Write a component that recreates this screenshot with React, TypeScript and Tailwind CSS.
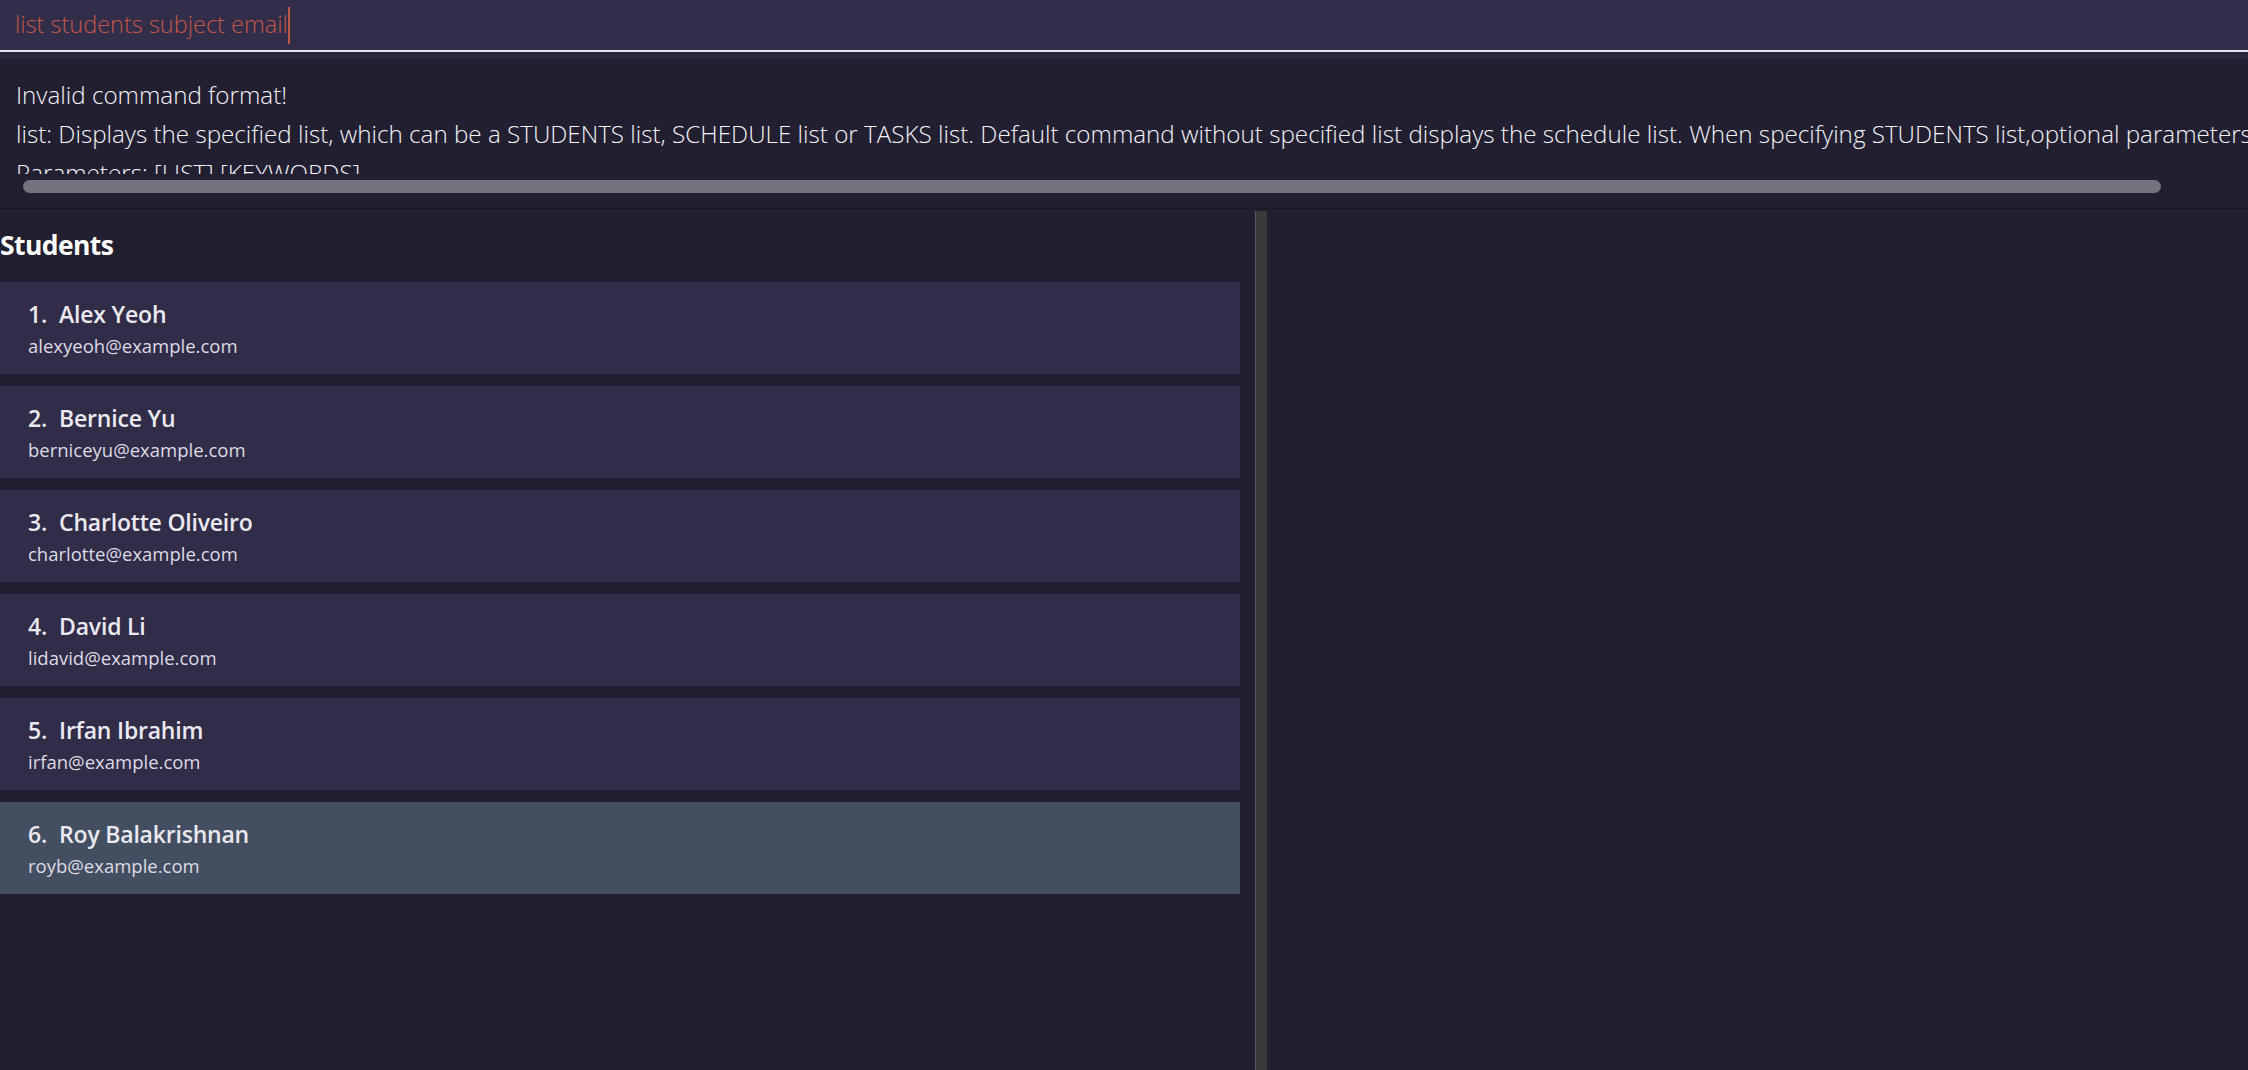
import React from 'react';

type Student = { name: string; email: string };

const students: Student[] = [
    { name: 'Alex Yeoh', email: 'alexyeoh@example.com' },
    { name: 'Bernice Yu', email: 'berniceyu@example.com' },
    { name: 'Charlotte Oliveiro', email: 'charlotte@example.com' },
    { name: 'David Li', email: 'lidavid@example.com' },
    { name: 'Irfan Ibrahim', email: 'irfan@example.com' },
    { name: 'Roy Balakrishnan', email: 'royb@example.com' },
];

const font = { fontFamily: '"Open Sans", "Noto Sans", sans-serif' };

const StudentCard: React.FC<{ index: number; student: Student; selected?: boolean }> = ({ index, student, selected }) => (
    <div className={`h-[92px] pl-[28px] pt-[17px] ${selected ? 'bg-[#434f60]' : 'bg-[#312c48]'}`}>
        <div className="flex gap-[12px] text-[23px] leading-[30px] font-semibold tracking-[-0.2px] text-[#ebe9f0]">
            <span>{index}.</span>
            <span>{student.name}</span>
        </div>
        <div className="mt-[5px] text-[18.5px] leading-[24px] text-[#dddbe4]">{student.email}</div>
    </div>
);

export default function App() {
    return (
        <div className="w-screen h-[1070px] bg-[#221f30] flex flex-col overflow-hidden" style={font}>
            {/* Command box */}
            <div className="h-[50px] bg-[#322d48] px-[15px] flex items-center border-b-2 border-[#e4e2ea] box-content">
                <span className="text-[23.5px] font-light text-[#c2584b] whitespace-nowrap">list students subject email</span>
                <span className="w-[2px] h-[37px] bg-[#c2584b]" />
            </div>
            <div className="h-[7px] bg-[#2a263c]" />

            {/* Result display */}
            <div className="pt-[16px]">
                <div className="h-[99px] overflow-hidden pl-[16px] text-[24.2px] leading-[39px] font-light text-[#f4f3f8] whitespace-nowrap">
                    <div>Invalid command format!</div>
                    <div>
                        list: Displays the specified list, which can be a STUDENTS list, SCHEDULE list or TASKS list. Default command without specified list displays the schedule list. When specifying STUDENTS list,optional parameters
                    </div>
                    <div>Parameters: [LIST] [KEYWORDS]</div>
                </div>
                <div className="mt-[6px] ml-[23px] w-[2138px] h-[13px] rounded-full bg-[#75727f]" />
                <div className="h-[15px]" />
                <div className="h-px bg-[#1a1826]" />
            </div>

            {/* Main panels */}
            <div className="flex-1 flex pt-[2px]">
                <div className="w-[1240px]">
                    <div className="pt-[15px] text-[26.5px] leading-[38px] font-bold tracking-[-0.6px] text-white">Students</div>
                    <div className="mt-[18px] flex flex-col gap-[12px]">
                        {students.map((s, i) => (
                            <StudentCard key={s.email} index={i + 1} student={s} selected={i === 5} />
                        ))}
                    </div>
                </div>
                <div className="ml-[15px] w-[12px] bg-[#3a3a3a] border-l border-[#565656]" />
                <div className="flex-1" />
            </div>
        </div>
    );
}
